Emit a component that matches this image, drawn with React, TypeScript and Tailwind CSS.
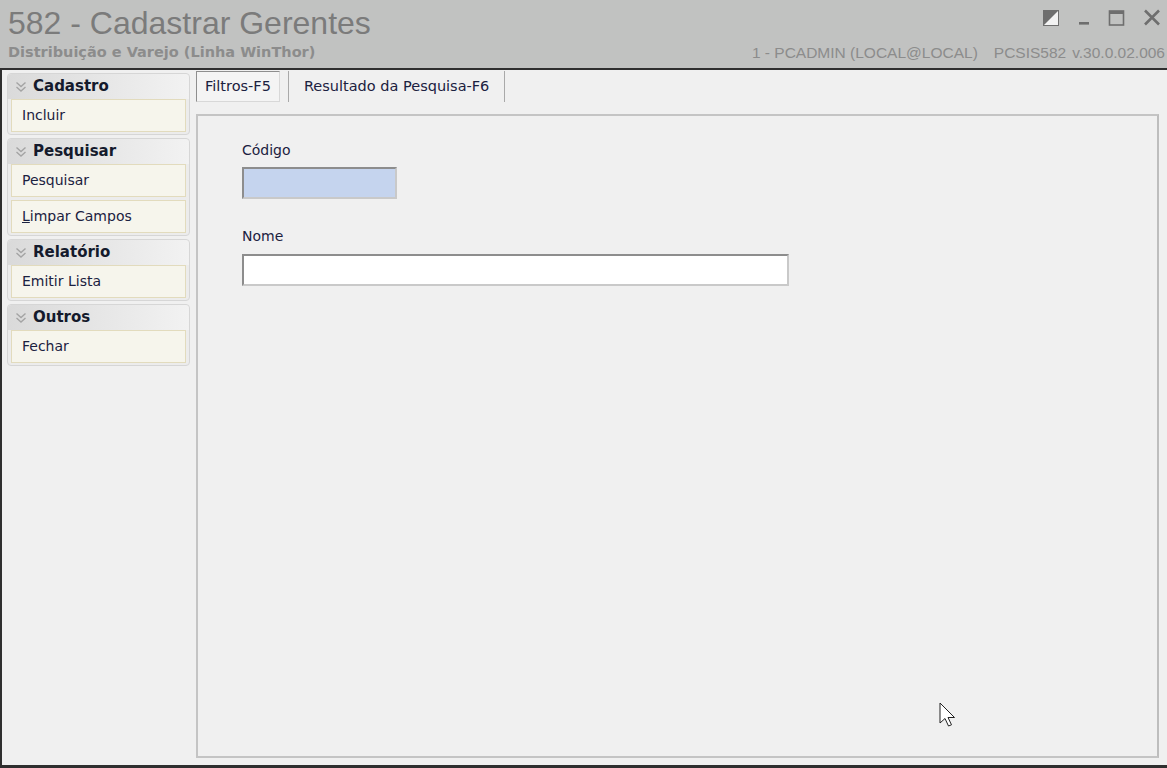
import React from 'react';

const groups = [
  { title: 'Cadastro', items: ['Incluir'] },
  { title: 'Pesquisar', items: ['Pesquisar', 'Limpar Campos'] },
  { title: 'Relatório', items: ['Emitir Lista'] },
  { title: 'Outros', items: ['Fechar'] },
];

function Chevrons() {
  return (
    <svg width="12" height="14" viewBox="0 0 12 14" className="shrink-0">
      <path d="M1.5 2.5 L6 6.5 L10.5 2.5 M1.5 7 L6 11 L10.5 7" fill="none" stroke="#a4a4a4" strokeWidth="1.4" />
    </svg>
  );
}

function WindowButtons() {
  return (
    <div className="flex items-end gap-[18px] pt-[9px] pr-[6px]">
      <svg width="17" height="16" viewBox="0 0 17 16">
        <rect x="0.5" y="0.5" width="15" height="15" fill="#f2f2f2" stroke="#6e6e6e" />
        <path d="M0 16 L16 0 L0 0 Z" fill="#6e6e6e" />
      </svg>
      <svg width="12" height="16" viewBox="0 0 12 16">
        <rect x="1" y="12" width="10" height="2.6" fill="#6e6e6e" />
      </svg>
      <svg width="17" height="16" viewBox="0 0 17 16">
        <rect x="1.5" y="1" width="14" height="14" fill="none" stroke="#6e6e6e" strokeWidth="1.6" />
        <rect x="1.5" y="1" width="14" height="3" fill="#6e6e6e" />
      </svg>
      <svg width="18" height="17" viewBox="0 0 18 17">
        <path d="M2 1.5 L16 15.5 M16 1.5 L2 15.5" stroke="#6e6e6e" strokeWidth="2.6" />
      </svg>
    </div>
  );
}

function Cursor() {
  return (
    <svg width="20" height="28" viewBox="0 0 20 28" className="absolute left-[741px] top-[586px]">
      <path d="M1 1 L1 21 L6 16.5 L9.5 24 L12.5 22.8 L9 15.5 L15.5 15.5 Z" fill="#ffffff" stroke="#222" strokeWidth="1" />
    </svg>
  );
}

export default function App() {
  return (
    <div
      className="w-[1167px] h-[768px] overflow-hidden bg-[#c1c2c1] flex flex-col"
      style={{ fontFamily: "Tahoma, 'DejaVu Sans', sans-serif" }}
    >
      {/* title bar */}
      <div className="h-[68px] flex justify-between shrink-0">
        <div className="pl-[8px] pt-[5px]">
          <div
            className="text-[32px] leading-[36px] text-[#7b7b7b]"
            style={{ fontFamily: "'Liberation Sans', Arial, sans-serif" }}
          >
            582 - Cadastrar Gerentes
          </div>
          <div className="mt-[3px] text-[14.5px] leading-[17px] font-bold text-[#8c8c8c]">
            Distribuição e Varejo (Linha WinThor)
          </div>
        </div>
        <div className="flex flex-col items-end" style={{ fontFamily: "'Liberation Sans', Arial, sans-serif" }}>
          <WindowButtons />
          <div className="mt-[18px] pr-[2px] flex gap-[16px] text-[15.5px] leading-[17px] text-[#8c8c8c] whitespace-pre">
            <span>1 - PCADMIN (LOCAL@LOCAL)</span>
            <span className="flex gap-[6px]">
              <span>PCSIS582</span>
              <span>v.30.0.02.006</span>
            </span>
          </div>
        </div>
      </div>

      {/* body */}
      <div className="flex-1 flex border-t-2 border-l-2 border-b-[3px] border-[#2f2f2f] bg-[#f0f0f0]">
        {/* left action panel */}
        <div className="w-[188px] shrink-0 pl-[5px] pt-[3px] flex flex-col gap-[3px]">
          {groups.map((g) => (
            <div
              key={g.title}
              className="rounded-[4px] border border-[#d6d6d6] bg-[#ececec] pb-[2px]"
            >
              <div className="h-[25px] flex items-center gap-[6px] pl-[7px] rounded-t-[4px] bg-gradient-to-r from-[#dadada] to-[#f2f2f2]">
                <Chevrons />
                <span className="text-[15px] font-bold text-[#141a2c]">{g.title}</span>
              </div>
              <div className="flex flex-col gap-[3px] px-[3px]">
                {g.items.map((it) => (
                  <div
                    key={it}
                    className="h-[33px] flex items-center pl-[10px] border border-[#e2dbbd] bg-[#f6f5ec] text-[14px] text-[#1b2140]"
                  >
                    {it === 'Limpar Campos' ? (
                      <span>
                        <span className="underline">L</span>impar Campos
                      </span>
                    ) : (
                      it
                    )}
                  </div>
                ))}
              </div>
            </div>
          ))}
        </div>

        {/* tabs + page */}
        <div className="flex-1 flex flex-col pl-[6px] pr-[8px] pb-[7px] pt-[1px]">
          <div className="h-[31px] flex items-stretch text-[14.5px] text-[#1b2140]">
            <div className="flex items-center px-[8px] border border-[#8e8e8e] border-b-[#d8d8d8] border-r-[#d8d8d8] bg-[#f4f4f4]">
              Filtros-F5
            </div>
            <div className="w-[8px]" />
            <div className="flex items-center px-[15px] border-l border-r border-[#a9a9a9]">
              Resultado da Pesquisa-F6
            </div>
          </div>

          <div className="mt-[12px] flex-1 relative border-2 border-[#c4c4c4] border-r-[#bdbdbd] bg-[#f0f0f0]">
            <div className="pl-[44px] pt-[26px] flex flex-col">
              <div className="text-[14px] text-[#1b2140] leading-[16px]">Código</div>
              <div className="mt-[9px] w-[155px] h-[32px] border-2 border-[#8d8d8d] border-b-[#c9c9c9] border-r-[#c9c9c9] bg-[#c5d4ee]" />
              <div className="mt-[29px] text-[14px] text-[#1b2140] leading-[16px]">Nome</div>
              <div className="mt-[10px] w-[547px] h-[32px] border-2 border-[#8d8d8d] border-b-[#c9c9c9] border-r-[#c9c9c9] bg-white" />
            </div>
            <Cursor />
          </div>
        </div>
      </div>
    </div>
  );
}
